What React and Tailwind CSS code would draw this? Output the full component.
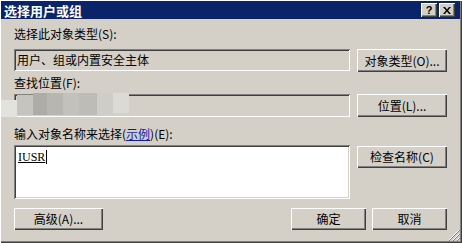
import React from "react";

const font = { fontFamily: '"Noto Sans CJK SC", "Noto Sans", sans-serif' };

const raised =
  "shadow-[inset_1px_1px_0_#ffffff,inset_-1px_-1px_0_#404040,inset_-2px_-2px_0_#808080]";
const sunken =
  "shadow-[inset_1px_1px_0_#808080,inset_-1px_-1px_0_#ffffff,inset_2px_2px_0_#404040,inset_-2px_-2px_0_#d4d0c8]";

function Btn({ children, className = "" }) {
  return (
    <div
      className={`flex items-center justify-center bg-[#d4d0c8] text-[12px] leading-none text-black ${raised} ${className}`}
    >
      {children}
    </div>
  );
}

export default function App() {
  return (
    <div
      style={font}
      className="relative flex h-[243px] w-[462px] flex-col overflow-hidden bg-[#d4d0c8] pl-px pt-px pr-[2px] shadow-[inset_1px_1px_0_#ffffff,inset_-1px_-1px_0_#404040,inset_-2px_-2px_0_#808080]"
    >
      {/* Title bar */}
      <div className="flex h-[18px] items-center bg-[#0a246a] pl-[3px] pr-[5px]">
        <span className="text-[13px] font-bold leading-none tracking-[0px] text-white">
          选择用户或组
        </span>
        <div className="ml-auto flex gap-[2px]">
          <div
            className={`flex h-[14px] w-[16px] items-center justify-center bg-[#d4d0c8] text-[11px] font-bold leading-none text-black ${raised}`}
            style={{ fontFamily: '"Liberation Sans", sans-serif' }}
          >
            ?
          </div>
          <div
            className={`flex h-[14px] w-[16px] items-center justify-center bg-[#d4d0c8] ${raised}`}
          >
            <svg width="8" height="7" viewBox="0 0 8 7">
              <path d="M0 0h2l2 2.5L6 0h2L5 3.5 8 7H6L4 4.5 2 7H0l3-3.5z" fill="#000" />
            </svg>
          </div>
        </div>
      </div>

      {/* Body */}
      <div className="flex flex-col pl-[13px] text-[12px] text-black">
        <div className="mt-[7px] h-4 leading-4">选择此对象类型(S):</div>

        <div className="mt-[7px] flex h-[23px] gap-[7px]">
          <div className={`flex h-[22px] w-[336px] items-center pl-[3px] leading-none ${sunken}`}>
            用户、组或内置安全主体
          </div>
          <Btn className="h-[23px] w-[90px]">对象类型(O)...</Btn>
        </div>

        <div className="mt-[3px] h-4 leading-4">查找位置(F):</div>

        <div className="relative mt-[3px] flex h-[23px] gap-[7px]">
          <div className={`h-[23px] w-[336px] ${sunken}`} />
          <Btn className="h-[23px] w-[90px]">位置(L)...</Btn>
          {/* blurred location text */}
          <div className="absolute left-[-13px] top-[-1px] flex h-[24px] w-[128px]">
            <div className="mt-[7px] h-[17px] w-[16px] bg-[#e4e2dc]" />
            <div className="mt-[2px] h-[20px] w-[16px] bg-[#c6c4be]" />
            <div className="h-[22px] w-[14px] bg-[#aeaca6]" />
            <div className="h-[22px] w-[16px] bg-[#b8b6b0]" />
            <div className="h-[22px] w-[16px] bg-[#c3c1bb]" />
            <div className="h-[22px] w-[18px] bg-[#bebcb6]" />
            <div className="h-[22px] w-[16px] bg-[#cfcdc7]" />
            <div className="h-[20px] w-[16px] bg-[#dcdad4]" />
          </div>
        </div>

        <div className="mt-[9px] h-4 leading-4">
          输入对象名称来选择(<span className="text-[#0b1cb0] underline">示例</span>)(E):
        </div>

        <div className="mt-[3px] flex gap-[7px]">
          <div className={`h-[54px] w-[336px] bg-white pl-[4px] pt-[5px] ${sunken}`}>
            <div className="flex items-start">
              <span
                className="text-[12px] leading-[14px] underline"
                style={{ fontFamily: '"Liberation Serif", serif' }}
              >
                IUSR
              </span>
              <span className="ml-px h-[14px] w-px bg-black" />
            </div>
          </div>
          <Btn className="mt-px h-[22px] w-[90px]">检查名称(C)</Btn>
        </div>

        <div className="mt-[9px] flex h-[22px]">
          <Btn className="h-[22px] w-[89px]">高级(A)...</Btn>
          <Btn className="ml-[188px] h-[22px] w-[75px]">确定</Btn>
          <Btn className="ml-[6px] h-[22px] w-[75px]">取消</Btn>
        </div>
      </div>

      {/* resize grip */}
      <svg
        className="absolute bottom-[2px] right-[2px]"
        width="12"
        height="12"
        viewBox="0 0 12 12"
      >
        <path d="M11 1L1 11M11 5L5 11M11 9L9 11" stroke="#ffffff" strokeWidth="1" />
        <path d="M12 1L1 12M12 5L5 12M12 9L9 12" stroke="#808080" strokeWidth="1" />
      </svg>
    </div>
  );
}
